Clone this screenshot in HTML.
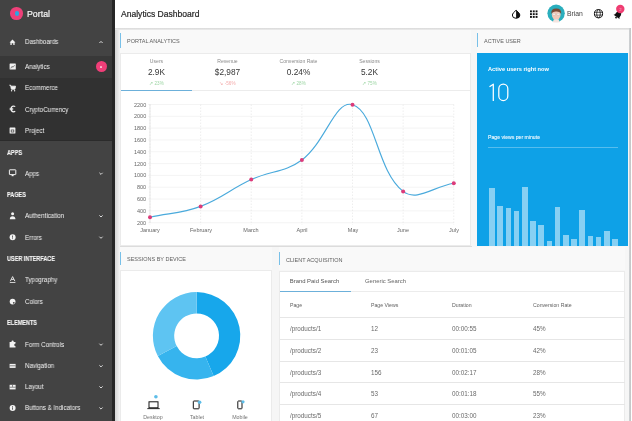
<!DOCTYPE html>
<html><head><meta charset="utf-8"><style>
*{box-sizing:border-box;margin:0;padding:0}
html,body{width:632px;height:421px;overflow:hidden;background:#f6f6f6;font-family:"Liberation Sans",sans-serif}
.a{position:absolute}
.t{position:absolute;white-space:nowrap;line-height:1;will-change:transform}
.si{color:#f4f4f4;font-size:6.5px;transform:scaleX(0.95);transform-origin:0 0}
.sh{color:#f6f6f6;font-size:6.4px;font-weight:bold;-webkit-text-stroke:0.1px #f6f6f6;transform:scaleX(0.86);transform-origin:0 0}
.ttl{color:#606060;font-size:5.5px}
.cl{color:#666;font-size:5.5px}
.th{color:#5f5f5f;font-size:5.2px}
.td{color:#6a6a6a;font-size:6.3px}
.tabl{color:#8a8a8a;font-size:5.1px}
.tabv{color:#363636;font-size:8.3px}
.up{color:#9fd6a6;font-size:4.6px}
.dn{color:#f4aaaa;font-size:4.6px}
.dv{color:#737373;font-size:5.3px}
.ctab{font-size:5.9px}
svg{position:absolute;left:0;top:0;overflow:visible}
</style></head><body>
<div class="a" style="left:0;top:0;width:113px;height:421px;background:#434343"></div>
<div class="a" style="left:0;top:56px;width:113px;height:85.3px;background:#313131"></div>
<div class="a" style="left:0;top:56px;width:113px;height:22px;background:#383838"></div>
<div class="a" style="left:0;top:140px;width:113px;height:1.3px;background:#2b2b2b"></div>
<div class="a" style="left:112.2px;top:0;width:2.5px;height:421px;background:#262626"></div>
<div class="a" style="left:114.7px;top:27px;width:5.5px;height:394px;background:linear-gradient(to right,#d4d4d4,#f4f4f4)"></div>
<div class="a" style="left:10.4px;top:7.2px;width:12.6px;height:12.6px;border-radius:50%;background:#ee4079"></div>
<div class="a" style="left:14.6px;top:11.4px;width:4.3px;height:4.3px;border-radius:50%;background:#2aa8e2"></div>
<div class="t" style="left:26.8px;top:10.2px;font-size:8.8px;color:#f4f4f4;-webkit-text-stroke:0.2px #f4f4f4">Portal</div>
<div class="t si" style="left:24.8px;top:39.20px">Dashboards</div>
<svg width="632" height="421"><path d="M99.4 43.00 L101 41.40 L102.6 43.00" fill="none" stroke="#e4e4e4" stroke-width="0.95"/></svg>
<div class="t si" style="left:24.8px;top:64.00px">Analytics</div>
<div class="t si" style="left:24.8px;top:85.30px">Ecommerce</div>
<div class="t si" style="left:24.8px;top:106.60px">CryptoCurrency</div>
<div class="t si" style="left:24.8px;top:128.00px">Project</div>
<div class="t sh" style="left:7px;top:149.60px">APPS</div>
<div class="t si" style="left:24.8px;top:170.60px">Apps</div>
<svg width="632" height="421"><path d="M99.4 172.80 L101 174.40 L102.6 172.80" fill="none" stroke="#e4e4e4" stroke-width="0.95"/></svg>
<div class="t sh" style="left:7px;top:192.30px">PAGES</div>
<div class="t si" style="left:24.8px;top:213.20px">Authentication</div>
<svg width="632" height="421"><path d="M99.4 215.40 L101 217.00 L102.6 215.40" fill="none" stroke="#e4e4e4" stroke-width="0.95"/></svg>
<div class="t si" style="left:24.8px;top:234.50px">Errors</div>
<svg width="632" height="421"><path d="M99.4 236.70 L101 238.30 L102.6 236.70" fill="none" stroke="#e4e4e4" stroke-width="0.95"/></svg>
<div class="t sh" style="left:7px;top:255.70px">USER INTERFACE</div>
<div class="t si" style="left:24.8px;top:277.20px">Typography</div>
<div class="t si" style="left:24.8px;top:298.80px">Colors</div>
<div class="t sh" style="left:7px;top:320.40px">ELEMENTS</div>
<div class="t si" style="left:24.8px;top:341.50px">Form Controls</div>
<svg width="632" height="421"><path d="M99.4 343.70 L101 345.30 L102.6 343.70" fill="none" stroke="#e4e4e4" stroke-width="0.95"/></svg>
<div class="t si" style="left:24.8px;top:363.10px">Navigation</div>
<svg width="632" height="421"><path d="M99.4 365.30 L101 366.90 L102.6 365.30" fill="none" stroke="#e4e4e4" stroke-width="0.95"/></svg>
<div class="t si" style="left:24.8px;top:384.20px">Layout</div>
<svg width="632" height="421"><path d="M99.4 386.40 L101 388.00 L102.6 386.40" fill="none" stroke="#e4e4e4" stroke-width="0.95"/></svg>
<div class="t si" style="left:24.8px;top:405.30px">Buttons &amp; Indicators</div>
<svg width="632" height="421"><path d="M99.4 407.50 L101 409.10 L102.6 407.50" fill="none" stroke="#e4e4e4" stroke-width="0.95"/></svg>
<div class="a" style="left:95.8px;top:61.3px;width:11px;height:11px;border-radius:50%;background:#f03e78"></div>
<div class="a" style="left:100.3px;top:65.6px;width:2px;height:2.2px;border-radius:50% 50% 20% 20%;background:#fac4d6"></div>
<svg width="632" height="421"><path d="M9.5 42.4 L12.5 39.5 L15.5 42.4 L14.6 42.4 L14.6 45 L13.3 45 L13.3 43.3 L11.7 43.3 L11.7 45 L10.4 45 L10.4 42.4Z" fill="#f2f2f2"/><rect x="9.6" y="63.6" width="6.2" height="6" rx="0.5" fill="#f2f2f2"/><path d="M10.8 68.4 L12 66.3 L13.1 67.3 L14.6 65.2" fill="none" stroke="#555" stroke-width="0.7"/><path d="M9.4 85.2 L10.6 85.2 L11.4 89.2 L14.9 89.2 L15.5 86.2 L11 86.2" fill="#f2f2f2" stroke="#f2f2f2" stroke-width="0.9"/><circle cx="11.6" cy="90.8" r="0.7" fill="#f2f2f2"/><circle cx="14.6" cy="90.8" r="0.7" fill="#f2f2f2"/><path d="M15.2 106.6 Q14.5 106 13.5 106 Q11.2 106.2 11 108.9 Q11.2 111.6 13.5 111.8 Q14.5 111.8 15.2 111.2" fill="none" stroke="#f2f2f2" stroke-width="1.2"/><rect x="9.6" y="107.9" width="3.6" height="0.8" fill="#f2f2f2"/><rect x="9.6" y="109.3" width="3.6" height="0.8" fill="#f2f2f2"/><rect x="9.6" y="127.5" width="5.8" height="6" rx="0.5" fill="#f2f2f2"/><rect x="10.8" y="129.6" width="3.4" height="2.8" fill="#444"/><rect x="11.6" y="130.3" width="1.8" height="1.4" fill="#f2f2f2"/><rect x="9.4" y="169.8" width="6.4" height="4.8" rx="0.4" fill="none" stroke="#f2f2f2" stroke-width="1"/><rect x="11.6" y="175" width="2" height="1.2" fill="#f2f2f2"/><circle cx="12.6" cy="213.8" r="1.5" fill="#f2f2f2"/><path d="M9.8 219.2 Q9.8 216.2 12.6 216.2 Q15.4 216.2 15.4 219.2Z" fill="#f2f2f2"/><circle cx="12.6" cy="237.3" r="3" fill="#f2f2f2"/><rect x="12.2" y="235.5" width="0.8" height="2.2" fill="#444"/><rect x="12.2" y="238.3" width="0.8" height="0.8" fill="#444"/><path d="M10.3 281.2 L12.6 276.6 L14.9 281.2 M11.3 279.4 L13.9 279.4" fill="none" stroke="#f2f2f2" stroke-width="0.9"/><rect x="9.8" y="282" width="5.6" height="0.8" fill="#f2f2f2"/><circle cx="12.6" cy="301.6" r="2.9" fill="#f2f2f2"/><circle cx="13.8" cy="302.8" r="0.9" fill="#444"/><path d="M9.6 342 L11.4 342 Q11.6 340.6 12.6 340.6 Q13.6 340.6 13.8 342 L15.5 342 L15.5 343.6 Q14.2 343.9 14.2 344.9 Q14.2 345.9 15.5 346.2 L15.5 347.6 L9.6 347.6Z" fill="#f2f2f2"/><rect x="9.6" y="363.9" width="6" height="4" fill="#f2f2f2"/><rect x="9.6" y="365.5" width="6" height="0.7" fill="#555"/><rect x="9.6" y="384.8" width="6" height="4.6" fill="#f2f2f2"/><rect x="9.6" y="386.8" width="6" height="0.7" fill="#555"/><rect x="12.3" y="384.8" width="0.7" height="2" fill="#555"/><circle cx="12.6" cy="408.1" r="3" fill="#f2f2f2"/><rect x="12.2" y="407.3" width="0.8" height="2.4" fill="#444"/><rect x="12.2" y="406" width="0.8" height="0.8" fill="#444"/></svg>
<div class="a" style="left:114.7px;top:0;width:518px;height:27.6px;background:#fff"></div>
<div class="a" style="left:114.7px;top:27.6px;width:518px;height:2px;background:linear-gradient(#d9d9d9,#ececec)"></div>
<div class="t" style="left:121.3px;top:10.1px;font-size:8.55px;color:#262626;-webkit-text-stroke:0.2px #262626">Analytics Dashboard</div>
<div class="t" style="left:567px;top:11px;font-size:6.8px;color:#444">Brian</div>
<svg width="632" height="421"><path d="M516.1 10.2 Q519.9 13.4 519.9 15 A3.8 3.3 0 0 1 512.3 15 Q512.3 13.4 516.1 10.2Z" fill="none" stroke="#111" stroke-width="1"/><path d="M516.1 10.2 Q519.9 13.4 519.9 15 A3.8 3.3 0 0 1 516.1 18.3Z" fill="#111"/><rect x="530.00" y="10.40" width="1.9" height="1.9" fill="#111"/><rect x="530.00" y="13.20" width="1.9" height="1.9" fill="#111"/><rect x="530.00" y="16.00" width="1.9" height="1.9" fill="#111"/><rect x="532.80" y="10.40" width="1.9" height="1.9" fill="#111"/><rect x="532.80" y="13.20" width="1.9" height="1.9" fill="#111"/><rect x="532.80" y="16.00" width="1.9" height="1.9" fill="#111"/><rect x="535.60" y="10.40" width="1.9" height="1.9" fill="#111"/><rect x="535.60" y="13.20" width="1.9" height="1.9" fill="#111"/><rect x="535.60" y="16.00" width="1.9" height="1.9" fill="#111"/><circle cx="556.1" cy="13.3" r="8.7" fill="#2aaebd"/><ellipse cx="556.2" cy="14.6" rx="4.4" ry="5.2" fill="#f2c9b9"/><path d="M551.3 14 Q550.8 8.6 556.2 8.6 Q561.6 8.6 561.2 14 Q560.2 11.3 556.2 11.4 Q552.4 11.3 551.3 14Z" fill="#7a4a36"/><path d="M553.8 19.2 L558.6 19.2 L559.6 22.2 Q556.2 22.8 552.8 22.2Z" fill="#f4e4df"/><rect x="552.5" y="13.3" width="3" height="2" rx="0.5" fill="#f8efe9" stroke="#b9a9a0" stroke-width="0.35"/><rect x="556.8" y="13.3" width="3" height="2" rx="0.5" fill="#f8efe9" stroke="#b9a9a0" stroke-width="0.35"/><circle cx="598.5" cy="13.7" r="4.1" fill="none" stroke="#111" stroke-width="1"/><ellipse cx="598.5" cy="13.7" rx="1.8" ry="4.1" fill="none" stroke="#111" stroke-width="0.8"/><line x1="594.4" y1="12.3" x2="602.6" y2="12.3" stroke="#111" stroke-width="0.7"/><line x1="594.4" y1="15.1" x2="602.6" y2="15.1" stroke="#111" stroke-width="0.7"/><g transform="rotate(35 618.2 14.5)"><path d="M614.6 17.4 L615.5 16.2 L615.5 13.8 Q615.7 11.2 618.2 11 Q620.7 11.2 620.9 13.8 L620.9 16.2 L621.8 17.4Z" fill="#111"/><circle cx="618.2" cy="18.3" r="0.9" fill="#111"/></g><circle cx="620.3" cy="9" r="4.2" fill="#ef3d72"/><text x="620.3" y="10.6" text-anchor="middle" font-family="Liberation Sans" font-size="4.2" fill="#f7b8cb">2</text></svg>
<div class="a" style="left:120px;top:29.6px;width:351px;height:23px;background:#f9f9f9"></div>
<div class="a" style="left:120.3px;top:33px;width:1.2px;height:14.60px;background:#78c0e8"></div>
<div class="t ttl" style="left:127.2px;top:39.10px">PORTAL ANALYTICS</div>
<div class="a" style="left:120.4px;top:52.5px;width:350.6px;height:193.5px;background:#fff;border:1px solid #ebebeb"></div>
<div class="a" style="left:476.9px;top:29.6px;width:151.7px;height:23px;background:#f9f9f9"></div>
<div class="a" style="left:477.2px;top:33.4px;width:1.2px;height:13.80px;background:#78c0e8"></div>
<div class="t ttl" style="left:484.2px;top:39.30px">ACTIVE USER</div>
<div class="a" style="left:477px;top:52.5px;width:151.4px;height:193.5px;background:#0ea1e7"></div>
<div class="a" style="left:120px;top:245.6px;width:351.5px;height:1px;background:#dcdcdc"></div>
<div class="a" style="left:120px;top:246.6px;width:152px;height:23.5px;background:#f9f9f9"></div>
<div class="a" style="left:120.3px;top:252.3px;width:1.2px;height:12.70px;background:#78c0e8"></div>
<div class="t ttl" style="left:127px;top:257.30px">SESSIONS BY DEVICE</div>
<div class="a" style="left:120.4px;top:270px;width:151.6px;height:160px;background:#fff;border:1px solid #ebebeb"></div>
<div class="a" style="left:279px;top:246.6px;width:346px;height:23.5px;background:#f9f9f9"></div>
<div class="a" style="left:279.3px;top:252.3px;width:1.2px;height:12.70px;background:#78c0e8"></div>
<div class="t ttl" style="left:285.5px;top:257.50px">CLIENT ACQUISITION</div>
<div class="a" style="left:279.3px;top:270.5px;width:345.7px;height:160px;background:#fff;border:1px solid #ebebeb"></div>
<div class="t tabl" style="left:120.5px;width:71px;text-align:center;top:58.5px">Users</div>
<div class="t tabv" style="left:120.5px;width:71px;text-align:center;top:68.3px">2.9K</div>
<div class="t up" style="left:120.5px;width:71px;text-align:center;top:81.5px">&#8599; 23%</div>
<div class="t tabl" style="left:191.5px;width:71px;text-align:center;top:58.5px">Revenue</div>
<div class="t tabv" style="left:191.5px;width:71px;text-align:center;top:68.3px">$2,987</div>
<div class="t dn" style="left:191.5px;width:71px;text-align:center;top:81.5px">&#8600; -56%</div>
<div class="t tabl" style="left:262.5px;width:71px;text-align:center;top:58.5px">Conversion Rate</div>
<div class="t tabv" style="left:262.5px;width:71px;text-align:center;top:68.3px">0.24%</div>
<div class="t up" style="left:262.5px;width:71px;text-align:center;top:81.5px">&#8599; 28%</div>
<div class="t tabl" style="left:333.5px;width:71px;text-align:center;top:58.5px">Sessions</div>
<div class="t tabv" style="left:333.5px;width:71px;text-align:center;top:68.3px">5.2K</div>
<div class="t up" style="left:333.5px;width:71px;text-align:center;top:81.5px">&#8599; 75%</div>
<div class="a" style="left:121px;top:90.3px;width:349px;height:0.7px;background:#ececec"></div>
<div class="a" style="left:121px;top:89.8px;width:71px;height:1.1px;background:#6cb0da"></div>
<svg width="632" height="421"><line x1="148" y1="104.50" x2="454" y2="104.50" stroke="#ececec" stroke-width="0.6"/><line x1="148" y1="116.32" x2="454" y2="116.32" stroke="#ececec" stroke-width="0.6"/><line x1="148" y1="128.14" x2="454" y2="128.14" stroke="#ececec" stroke-width="0.6"/><line x1="148" y1="139.96" x2="454" y2="139.96" stroke="#ececec" stroke-width="0.6"/><line x1="148" y1="151.78" x2="454" y2="151.78" stroke="#ececec" stroke-width="0.6"/><line x1="148" y1="163.60" x2="454" y2="163.60" stroke="#ececec" stroke-width="0.6"/><line x1="148" y1="175.42" x2="454" y2="175.42" stroke="#ececec" stroke-width="0.6"/><line x1="148" y1="187.24" x2="454" y2="187.24" stroke="#ececec" stroke-width="0.6"/><line x1="148" y1="199.06" x2="454" y2="199.06" stroke="#ececec" stroke-width="0.6"/><line x1="148" y1="210.88" x2="454" y2="210.88" stroke="#ececec" stroke-width="0.6"/><line x1="148" y1="222.70" x2="454" y2="222.70" stroke="#ececec" stroke-width="0.6"/><line x1="150.00" y1="104.5" x2="150.00" y2="225" stroke="#e2e2e2" stroke-width="0.6" stroke-dasharray="1.5 1.5"/><line x1="200.63" y1="104.5" x2="200.63" y2="225" stroke="#e2e2e2" stroke-width="0.6" stroke-dasharray="1.5 1.5"/><line x1="251.26" y1="104.5" x2="251.26" y2="225" stroke="#e2e2e2" stroke-width="0.6" stroke-dasharray="1.5 1.5"/><line x1="301.89" y1="104.5" x2="301.89" y2="225" stroke="#e2e2e2" stroke-width="0.6" stroke-dasharray="1.5 1.5"/><line x1="352.52" y1="104.5" x2="352.52" y2="225" stroke="#e2e2e2" stroke-width="0.6" stroke-dasharray="1.5 1.5"/><line x1="403.15" y1="104.5" x2="403.15" y2="225" stroke="#e2e2e2" stroke-width="0.6" stroke-dasharray="1.5 1.5"/><line x1="453.78" y1="104.5" x2="453.78" y2="225" stroke="#e2e2e2" stroke-width="0.6" stroke-dasharray="1.5 1.5"/><line x1="150" y1="104" x2="150" y2="223" stroke="#d8d8d8" stroke-width="0.6"/><path d="M150.00 217.20 C170.25 212.88 181.40 213.54 200.63 206.40 C221.91 198.50 230.46 189.13 251.26 179.60 C270.97 170.57 284.88 172.58 301.89 160.00 C325.38 142.62 335.20 99.33 352.52 104.70 C375.71 111.89 376.34 170.59 403.15 191.40 C416.84 202.03 433.53 186.54 453.78 183.30" fill="none" stroke="#4aaadc" stroke-width="1.15"/><circle cx="150.00" cy="217.2" r="2" fill="#dc3b7a"/><circle cx="200.63" cy="206.4" r="2" fill="#dc3b7a"/><circle cx="251.26" cy="179.6" r="2" fill="#dc3b7a"/><circle cx="301.89" cy="160" r="2" fill="#dc3b7a"/><circle cx="352.52" cy="104.7" r="2" fill="#dc3b7a"/><circle cx="403.15" cy="191.4" r="2" fill="#dc3b7a"/><circle cx="453.78" cy="183.3" r="2" fill="#dc3b7a"/></svg>
<div class="t cl" style="right:485.6px;top:102.50px">2200</div>
<div class="t cl" style="right:485.6px;top:114.32px">2000</div>
<div class="t cl" style="right:485.6px;top:126.14px">1800</div>
<div class="t cl" style="right:485.6px;top:137.96px">1600</div>
<div class="t cl" style="right:485.6px;top:149.78px">1400</div>
<div class="t cl" style="right:485.6px;top:161.60px">1200</div>
<div class="t cl" style="right:485.6px;top:173.42px">1000</div>
<div class="t cl" style="right:485.6px;top:185.24px">800</div>
<div class="t cl" style="right:485.6px;top:197.06px">600</div>
<div class="t cl" style="right:485.6px;top:208.88px">400</div>
<div class="t cl" style="right:485.6px;top:220.70px">200</div>
<div class="t cl" style="left:120.00px;width:60px;text-align:center;top:228.2px">January</div>
<div class="t cl" style="left:170.63px;width:60px;text-align:center;top:228.2px">February</div>
<div class="t cl" style="left:221.26px;width:60px;text-align:center;top:228.2px">March</div>
<div class="t cl" style="left:271.89px;width:60px;text-align:center;top:228.2px">April</div>
<div class="t cl" style="left:322.52px;width:60px;text-align:center;top:228.2px">May</div>
<div class="t cl" style="left:373.15px;width:60px;text-align:center;top:228.2px">June</div>
<div class="t cl" style="left:423.78px;width:60px;text-align:center;top:228.2px">July</div>
<div class="t" style="left:487.9px;top:66.6px;font-size:5.7px;font-weight:bold;color:#fff">Active users right now</div>
<svg width="632" height="421"><path d="M489.5 86.8 L493.3 84.2 L493.3 100.9" fill="none" stroke="#fff" stroke-width="1.25" stroke-linejoin="round"/><rect x="498.8" y="84.2" width="9" height="16.3" rx="4.5" fill="none" stroke="#fff" stroke-width="1.25"/></svg>
<div class="t" style="left:487.9px;top:135px;font-size:5.15px;color:#f4faff;-webkit-text-stroke:0.1px #f4faff">Page views per minute</div>
<div class="a" style="left:488px;top:146.8px;width:130px;height:0.6px;background:rgba(255,255,255,0.3)"></div>
<div class="a" style="left:489.20px;top:188px;width:5.7px;height:57.80px;background:rgba(255,255,255,0.5)"></div>
<div class="a" style="left:497.40px;top:205.9px;width:5.7px;height:39.90px;background:rgba(255,255,255,0.5)"></div>
<div class="a" style="left:505.60px;top:207.7px;width:5.7px;height:38.10px;background:rgba(255,255,255,0.5)"></div>
<div class="a" style="left:513.80px;top:211px;width:5.7px;height:34.80px;background:rgba(255,255,255,0.5)"></div>
<div class="a" style="left:522.00px;top:187.2px;width:5.7px;height:58.60px;background:rgba(255,255,255,0.5)"></div>
<div class="a" style="left:530.20px;top:220.8px;width:5.7px;height:25.00px;background:rgba(255,255,255,0.5)"></div>
<div class="a" style="left:538.40px;top:225.1px;width:5.7px;height:20.70px;background:rgba(255,255,255,0.5)"></div>
<div class="a" style="left:546.60px;top:241px;width:5.7px;height:4.80px;background:rgba(255,255,255,0.5)"></div>
<div class="a" style="left:554.80px;top:206.7px;width:5.7px;height:39.10px;background:rgba(255,255,255,0.5)"></div>
<div class="a" style="left:563.00px;top:234.6px;width:5.7px;height:11.20px;background:rgba(255,255,255,0.5)"></div>
<div class="a" style="left:571.20px;top:238.7px;width:5.7px;height:7.10px;background:rgba(255,255,255,0.5)"></div>
<div class="a" style="left:579.40px;top:209.7px;width:5.7px;height:36.10px;background:rgba(255,255,255,0.5)"></div>
<div class="a" style="left:587.60px;top:236.2px;width:5.7px;height:9.60px;background:rgba(255,255,255,0.5)"></div>
<div class="a" style="left:595.80px;top:237.4px;width:5.7px;height:8.40px;background:rgba(255,255,255,0.5)"></div>
<div class="a" style="left:604.00px;top:231px;width:5.7px;height:14.80px;background:rgba(255,255,255,0.5)"></div>
<div class="a" style="left:612.20px;top:239.2px;width:5.7px;height:6.60px;background:rgba(255,255,255,0.5)"></div>
<svg width="632" height="421"><path d="M196.60 292.10 A43.7 43.7 0 0 1 213.67 376.03 L205.35 356.42 A22.4 22.4 0 0 0 196.60 313.40Z" fill="#17a7eb"/><path d="M213.67 376.03 A43.7 43.7 0 0 1 157.80 355.91 L176.71 346.11 A22.4 22.4 0 0 0 205.35 356.42Z" fill="#36b4ee"/><path d="M157.80 355.91 A43.7 43.7 0 0 1 196.60 292.10 L196.60 313.40 A22.4 22.4 0 0 0 176.71 346.11Z" fill="#5ec4f2"/></svg>
<svg width="632" height="421"><rect x="149" y="401.8" width="9" height="6" fill="none" stroke="#151515" stroke-width="1"/><rect x="147.3" y="408.2" width="12.4" height="0.9" fill="#151515"/><circle cx="155.9" cy="396.8" r="1.8" fill="#5dbde8"/><rect x="193.3" y="401" width="5.8" height="7.8" rx="0.6" fill="none" stroke="#151515" stroke-width="1"/><circle cx="199.6" cy="402.2" r="1.8" fill="#5dbde8"/><rect x="237.8" y="401" width="4.2" height="7.8" rx="0.6" fill="none" stroke="#151515" stroke-width="1"/><circle cx="243" cy="401.8" r="1.6" fill="#5dbde8"/></svg>
<div class="t dv" style="left:133px;width:40px;text-align:center;top:415.1px">Desktop</div>
<div class="t dv" style="left:176.5px;width:40px;text-align:center;top:415.1px">Tablet</div>
<div class="t dv" style="left:219.5px;width:40px;text-align:center;top:415.1px">Mobile</div>
<div class="t ctab" style="left:278.7px;width:71px;text-align:center;top:278.5px;color:#555">Brand Paid Search</div>
<div class="t ctab" style="left:349.7px;width:71px;text-align:center;top:278.5px;color:#666">Generic Search</div>
<div class="a" style="left:280px;top:291.3px;width:344px;height:0.7px;background:#ececec"></div>
<div class="a" style="left:279.5px;top:290.8px;width:71px;height:1.1px;background:#6cb0da"></div>
<div class="t th" style="left:289.79999999999995px;top:302.8px">Page</div>
<div class="t th" style="left:371.0px;top:302.8px">Page Views</div>
<div class="t th" style="left:451.79999999999995px;top:302.8px">Duration</div>
<div class="t th" style="left:533.1px;top:302.8px">Conversion Rate</div>
<div class="a" style="left:280px;top:317px;width:344.5px;height:0.8px;background:#e6e6e6"></div>
<div class="a" style="left:280px;top:339px;width:344.5px;height:0.8px;background:#e6e6e6"></div>
<div class="a" style="left:280px;top:361px;width:344.5px;height:0.8px;background:#e6e6e6"></div>
<div class="a" style="left:280px;top:382.4px;width:344.5px;height:0.8px;background:#e6e6e6"></div>
<div class="a" style="left:280px;top:404.3px;width:344.5px;height:0.8px;background:#e6e6e6"></div>
<div class="t td" style="left:289.79999999999995px;top:326.00px">/products/1</div>
<div class="t td" style="left:371.0px;top:326.00px">12</div>
<div class="t td" style="left:451.79999999999995px;top:326.00px">00:00:55</div>
<div class="t td" style="left:533.1px;top:326.00px">45%</div>
<div class="t td" style="left:289.79999999999995px;top:348.00px">/products/2</div>
<div class="t td" style="left:371.0px;top:348.00px">23</div>
<div class="t td" style="left:451.79999999999995px;top:348.00px">00:01:05</div>
<div class="t td" style="left:533.1px;top:348.00px">42%</div>
<div class="t td" style="left:289.79999999999995px;top:369.60px">/products/3</div>
<div class="t td" style="left:371.0px;top:369.60px">156</div>
<div class="t td" style="left:451.79999999999995px;top:369.60px">00:02:17</div>
<div class="t td" style="left:533.1px;top:369.60px">28%</div>
<div class="t td" style="left:289.79999999999995px;top:391.40px">/products/4</div>
<div class="t td" style="left:371.0px;top:391.40px">53</div>
<div class="t td" style="left:451.79999999999995px;top:391.40px">00:01:18</div>
<div class="t td" style="left:533.1px;top:391.40px">55%</div>
<div class="t td" style="left:289.79999999999995px;top:413.00px">/products/5</div>
<div class="t td" style="left:371.0px;top:413.00px">67</div>
<div class="t td" style="left:451.79999999999995px;top:413.00px">00:03:00</div>
<div class="t td" style="left:533.1px;top:413.00px">23%</div>
<div class="a" style="left:628.6px;top:27.6px;width:2.4px;height:394px;background:linear-gradient(to right,#cfd3d6,#c4c4c4)"></div>
<div class="a" style="left:631px;top:0;width:1px;height:421px;background:#fff"></div>
</body></html>
